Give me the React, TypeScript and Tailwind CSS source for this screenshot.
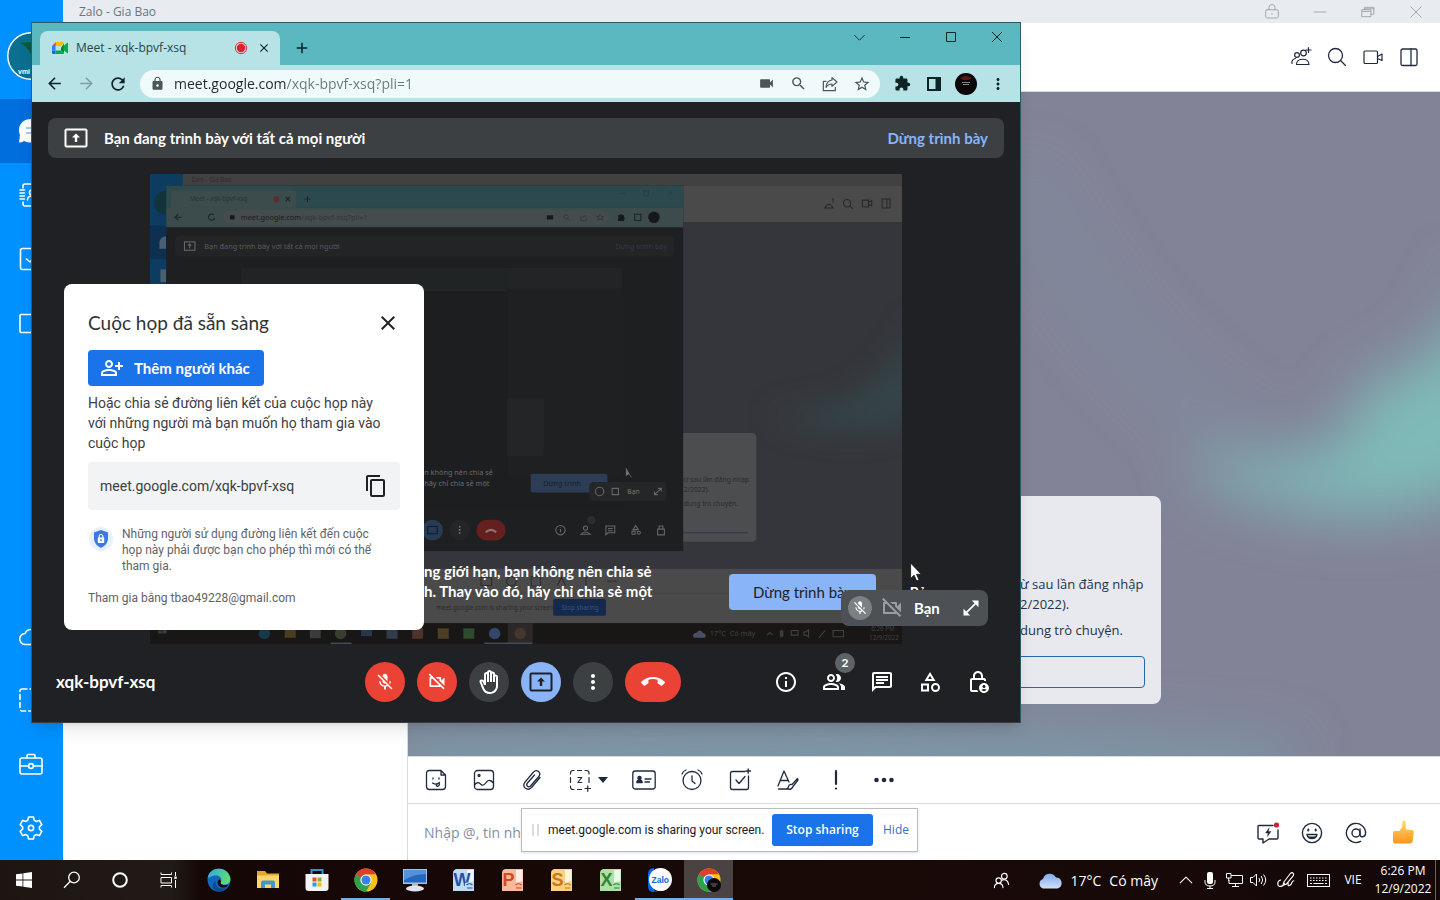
import React from "react";
import {
  MdArrowBack,
  MdArrowForward,
  MdCallEnd,
  MdClose,
  MdExtension,
  MdInfoOutline,
  MdLock,
  MdMicOff,
  MdMoreVert,
  MdOpenInFull,
  MdOutlineBackHand,
  MdOutlineCategory,
  MdOutlineChat,
  MdOutlineContentCopy,
  MdOutlineLockPerson,
  MdOutlinePeopleAlt,
  MdOutlinePersonAddAlt,
  MdOutlineVideocamOff,
  MdRefresh,
  MdAdd,
  MdSearch,
  MdStarBorder,
  MdVideocam,
} from "react-icons/md";

type IconProps = { size?: number; children: React.ReactNode; className?: string; stroke?: number };

function Line({ size = 24, children, className = "", stroke = 1.4 }: IconProps) {
  return (
    <svg
      width={size}
      height={size}
      viewBox="0 0 24 24"
      fill="none"
      stroke="currentColor"
      strokeWidth={stroke}
      strokeLinecap="round"
      strokeLinejoin="round"
      className={`block shrink-0 ${className}`}
      aria-hidden="true"
    >
      {children}
    </svg>
  );
}

function IconButton({
  label,
  className = "",
  children,
}: {
  label: string;
  className?: string;
  children: React.ReactNode;
}) {
  return (
    <button type="button" aria-label={label} className={`flex shrink-0 items-center justify-center ${className}`}>
      {children}
    </button>
  );
}

/* ---------- Zalo ---------- */

function ZaloSidebar() {
  const item = "h-16 w-full pr-px text-white";
  return (
    <nav className="flex w-[63px] shrink-0 flex-col bg-[#0091ff]">
      <div className="flex h-[99px] shrink-0 items-center justify-center pt-3 pr-px">
        <svg width="48" height="48" viewBox="0 0 48 48" aria-hidden="true">
          <circle cx="24" cy="24" r="23.2" fill="#0b6f8f" stroke="#fff" strokeWidth="1.4" />
          <path d="M13 11L24 10V22Q20 14 13 11Z" fill="#0a5a3c" />
          <text x="11" y="42" fontSize="7" fontWeight="700" fill="#fff" fontFamily="Liberation Sans, sans-serif">
            vmi
          </text>
        </svg>
      </div>
      <IconButton label="Tin nhắn" className={`${item} bg-[#006edc]`}>
        <svg width="26" height="26" viewBox="0 0 26 26" aria-hidden="true">
          <path d="M13 1C6 1 1 5.500 1 12q0 3 1 5l-1 7.500q3 0 5-1.500 3 1.500 7 1.500c7 0 12-5 12-12S20 1 13 1Z" fill="#fff" />
          <path d="M8 10h10M8 15h8" stroke="#4b9be8" strokeWidth="1.200" />
        </svg>
      </IconButton>
      <IconButton label="Danh bạ" className={item}>
        <Line stroke={1.6}>
          <path d="M4 5V3q0-2 2-2h14q2 0 2 2v18q0 2-2 2H6q-2 0-2-2v-2" />
          <path d="M1 7h4.500M1 10h4.500M1 13h4.500M1 16h4.500" />
          <circle cx="13" cy="9.500" r="2.500" />
          <path d="M8.500 17q0-4 4.500-4t4.500 4" />
        </Line>
      </IconButton>
      <IconButton label="Việc cần làm" className={item}>
        <Line stroke={1.6}>
          <rect x="1.500" y="1.500" width="21" height="21" rx="2" />
          <path d="M7.500 12l3.500 3 6-7" />
        </Line>
      </IconButton>
      <IconButton label="Thư mục" className={item}>
        <Line stroke={1.6}>
          <rect x="1" y="3.500" width="22" height="18" rx="1" />
        </Line>
      </IconButton>
      <div className="flex-1" />
      <IconButton label="Cloud" className={item}>
        <Line stroke={1.6}>
          <path d="M6.500 20.500h11a5.500 5.500 0 0 0 .5-11A6.500 6.500 0 0 0 6 9.500a5.500 5.500 0 0 0 .5 11Z" />
        </Line>
      </IconButton>
      <IconButton label="Chụp màn hình" className={item}>
        <Line stroke={1.6}>
          <rect x="1" y="1" width="22" height="22" rx="2" strokeDasharray="5 3" />
        </Line>
      </IconButton>
      <IconButton label="Công cụ" className={item}>
        <Line stroke={1.6}>
          <rect x="1" y="6" width="22" height="16" rx="2" />
          <path d="M8 5.500V3.700Q8 2.500 9.200 2.500h5.600Q16 2.500 16 3.700v1.800M1 14h8.500M14.500 14H23" />
          <circle cx="12" cy="14" r="2.400" />
        </Line>
      </IconButton>
      <IconButton label="Cài đặt" className={item}>
        <Line stroke={1.6}>
          <path d="M9.600 1h4.800l.8 3.300 2 1.100 3.200-1 2.400 4.200-2.400 2.200v2.400l2.400 2.200-2.400 4.200-3.200-1-2 1.100-.8 3.300H9.600l-.8-3.300-2-1.100-3.200 1-2.400-4.200 2.400-2.200v-2.400L1.200 8.600l2.400-4.200 3.200 1 2-1.100Z" />
          <circle cx="12" cy="12" r="2.600" />
        </Line>
      </IconButton>
    </nav>
  );
}

function ChatWallpaper() {
  return (
    <svg
      className="absolute inset-0 h-full w-full"
      viewBox="0 0 1032 664"
      preserveAspectRatio="none"
      aria-hidden="true"
    >
      <defs>
        <filter id="soft" x="-30%" y="-60%" width="160%" height="220%">
          <feGaussianBlur stdDeviation="28" />
        </filter>
      </defs>
      <rect width="1032" height="664" fill="#828397" />
      <g filter="url(#soft)">
        <path d="M610 80Q720 300 880 375Q1000 390 1080 180" fill="none" stroke="#7c94a2" strokeWidth="46" opacity=".4" />
        <path d="M790 360Q940 410 1080 190V390Q960 460 790 385Z" fill="#7fb6b8" />
        <path d="M950 300Q1020 270 1090 220V390Q1000 410 930 400Z" fill="#7fbab8" />
        <path d="M-20 640Q400 610 880 655V700H-20Z" fill="#7b99a8" />
      </g>
    </svg>
  );
}

function ZaloChat() {
  const tool = "w-12 h-full text-[#1f2b3d]";
  return (
    <section className="flex min-w-0 flex-1 flex-col border-l border-[#d6dbe1] bg-white">
      <header className="flex h-[69px] shrink-0 items-center justify-end gap-3 border-b border-[#d6dbe1] px-[19px] text-[#1f2b3d]">
        <IconButton label="Thêm thành viên">
          <Line stroke={1.2}>
            <circle cx="8" cy="10" r="2.400" />
            <circle cx="14.500" cy="8" r="2.800" />
            <path d="M7.500 19.500c0-7 12.500-7 12.500 0ZM3 18.500c-.6-2.500 1-4.500 3.500-5M19.500 2.500v5M17 5h5" />
          </Line>
        </IconButton>
        <IconButton label="Tìm kiếm">
          <Line stroke={1.3}>
            <circle cx="10.500" cy="10.500" r="7" />
            <path d="M16 16l4.500 4.500" />
          </Line>
        </IconButton>
        <IconButton label="Cuộc gọi video">
          <Line stroke={1.2}>
            <rect x="3" y="6" width="13.500" height="12.500" rx="1" />
            <path d="M16.500 11.500L21 9v6.500l-4.500-2" />
          </Line>
        </IconButton>
        <IconButton label="Thông tin hội thoại">
          <Line stroke={1.3}>
            <rect x="4" y="4" width="16" height="16.500" rx="1.500" />
            <path d="M14 4v16.500" />
          </Line>
        </IconButton>
      </header>

      <div className="relative flex flex-1 flex-col items-center justify-end pb-[52px]">
        <ChatWallpaper />
        <div className="relative flex w-[474px] flex-col rounded-lg bg-[#e7e9ee] px-4 pt-[78px] pb-4 text-[13px] text-[#24324a]">
          <div className="pl-[317px] leading-5">
            <p className="text-nowrap">
              ừ sau lần đăng nhập
              <br />
              2/2022).
            </p>
            <p className="mt-[6px] text-nowrap">dung trò chuyện.</p>
          </div>
          <button type="button" aria-label="Đồng bộ" className="mt-4 h-8 rounded border border-[#2566b0]" />
        </div>
      </div>

      <div className="flex h-[48px] shrink-0 items-center border-y border-[#d6dbe1] pl-1">
        <IconButton label="Sticker" className={tool}>
          <Line stroke={1.3}>
            <path d="M17 2.500H5.500q-3 0-3 3v13q0 3 3 3h13q3 0 3-3V7ZM17 2.500V7h4.500" />
            <path d="M9 10v1M15 10v1M8.500 15q4 2.500 7-.5M12.500 16v2q2.500 1 3-2" />
          </Line>
        </IconButton>
        <IconButton label="Hình ảnh" className={tool}>
          <Line stroke={1.3}>
            <rect x="2.500" y="2.500" width="19" height="19" rx="3" />
            <circle cx="7" cy="7.500" r="1" />
            <path d="M2.500 17q3-4 6-1t6-2q3-3.500 7 1" />
          </Line>
        </IconButton>
        <IconButton label="Đính kèm" className={tool}>
          <Line stroke={1.3}>
            <path d="M20 9.500l-8.500 10q-3 3-6 .8t-.7-6L13.500 4q2.500-2.500 5-.5t.3 5L10.500 18q-1.500 1.500-3 .3t-.3-3L14.500 7" />
          </Line>
        </IconButton>
        <button
          type="button"
          aria-label="Chụp màn hình"
          className="flex h-full w-[64px] shrink-0 items-center gap-[6px] pl-3 text-[#1f2b3d]"
        >
          <Line stroke={1.2}>
            <path d="M2.500 6V5q0-2.500 2.500-2.500h1M9.500 2.500h4M17 2.500h1.500q2.500 0 2.500 2.500v1M21 9.500v5M2.500 9.500v5M2.500 18v1q0 2.500 2.500 2.500h1M9.500 21.500h4M17 20.500h5.500M19.750 17.800v5.500" />
            <path d="M9.800 9.500h4l-4 5h4" />
          </Line>
          <svg width="10" height="6" viewBox="0 0 10 6" aria-hidden="true">
            <path d="M0 0h10L5 6Z" fill="currentColor" />
          </svg>
        </button>
        <IconButton label="Danh thiếp" className={tool}>
          <Line stroke={1.3}>
            <rect x=".8" y="3" width="22.400" height="18" rx="2.500" />
            <circle cx="7.500" cy="10" r="1.600" fill="currentColor" />
            <path d="M4.800 14.500q0-2.300 2.700-2.300t2.700 2.300ZM13 11h6M13 14h4.500" fill="currentColor" />
          </Line>
        </IconButton>
        <IconButton label="Nhắc hẹn" className={tool}>
          <Line stroke={1.3}>
            <circle cx="12" cy="12.500" r="9" />
            <path d="M12 8v5l3 2.500M2 6Q3 3 6 2M22 6q-1-3-4-4" />
          </Line>
        </IconButton>
        <IconButton label="Giao việc" className={tool}>
          <Line stroke={1.3}>
            <path d="M17 3.500H4.500q-2 0-2 2v14q0 2 2 2h14q2 0 2-2V8M8 12l3 3.500 6-7M18 3h4.500M20.200.8v4.500" />
          </Line>
        </IconButton>
        <IconButton label="Định dạng" className={tool}>
          <Line stroke={1.3}>
            <path d="M2 18L8 3l5 11M4.500 12.500h7M2.500 21h10M21.500 10.500l-5.500 6q-3-.5-3.500 2t-2 2.500q5 1.500 6.500-2.500l5-6.500Z" />
          </Line>
        </IconButton>
        <IconButton label="Quan trọng" className={tool}>
          <Line stroke={2.2}>
            <path d="M12 3v13M12 20.500v.1" />
          </Line>
        </IconButton>
        <IconButton label="Thêm" className={tool}>
          <svg width="24" height="24" viewBox="0 0 24 24" fill="currentColor" aria-hidden="true">
            <circle cx="4.500" cy="12" r="2.300" />
            <circle cx="12" cy="12" r="2.300" />
            <circle cx="19.500" cy="12" r="2.300" />
          </svg>
        </IconButton>
      </div>

      <div className="flex h-14 shrink-0 items-center gap-5 pr-6 pl-4 text-[#1f2b3d]">
        <input
          type="text"
          aria-label="Tin nhắn"
          placeholder="Nhập @, tin nh"
          className="min-w-0 flex-1 text-[14px] outline-none placeholder:text-[#7f8fa4]"
        />
        <IconButton label="Tin nhắn nhanh">
          <Line stroke={1.4}>
            <path d="M17 5.500H3q-1 0-1 1V18q0 1 1 1h4v4l6-4h8q1 0 1-1v-8" />
            <path d="M13 8l-3.500 5H12l-.5 3.500 3.500-5h-2.500Z" fill="currentColor" strokeWidth=".4" />
            <circle cx="20.500" cy="5" r="2.600" fill="#c9212f" stroke="none" />
          </Line>
        </IconButton>
        <IconButton label="Biểu cảm">
          <Line stroke={1.4}>
            <circle cx="12" cy="13" r="9.600" />
            <path d="M8.300 9.500v1M15.700 9.500v1" strokeWidth="2" />
            <path d="M7 14.500h10q-1 4-5 4t-5-4Z" />
            <path d="M8.500 16.500h7q-1 2-3.500 2t-3.500-2Z" fill="currentColor" stroke="none" />
          </Line>
        </IconButton>
        <IconButton label="Nhắc tên">
          <Line stroke={1.4}>
            <circle cx="12" cy="13" r="4" />
            <path d="M16 9v5.500c0 3.500 5.600 3 5.600-1.500a9.600 9.600 0 1 0-5 8.400" />
          </Line>
        </IconButton>
        <IconButton label="Thích" className="ml-[2px]">
          <svg width="26" height="26" viewBox="0 0 26 26" aria-hidden="true">
            <defs>
              <linearGradient id="thumb" x1="0" y1="0" x2="0" y2="1">
                <stop offset="0" stopColor="#fddc6a" />
                <stop offset="1" stopColor="#f7961e" />
              </linearGradient>
            </defs>
            <path
              d="M3 14q0-2 2-2h4.500l2.700-4 .3-6q2-1.300 3 .5l.5 8 6 .5q2 0 1.800 2l-1 8.500q-.3 3-3.300 3H5q-2 0-2-2Z"
              fill="url(#thumb)"
            />
            <path d="M17 14.500h6M16.500 18h6.300M16.500 21h5" stroke="#f5a433" strokeWidth=".7" />
          </svg>
        </IconButton>
      </div>
    </section>
  );
}

function ZaloWindow() {
  return (
    <div className="flex h-full">
      <ZaloSidebar />
      <div className="flex min-w-0 flex-1 flex-col">
        <div className="flex h-[23px] shrink-0 items-center justify-between bg-[#e8ebef] pr-3 pl-4 text-[12px] text-[#6d747e]">
          <span>Zalo - Gia Bao</span>
          <div className="flex items-center gap-6 text-[#a3a8ae]">
            <IconButton label="Khóa" className="w-6">
              <Line size={18} stroke={1.3}>
                <rect x="3.500" y="9" width="17" height="11" rx="2" />
                <path d="M8 9V6q0-4 4-4t4 4v3M12 14v1" />
              </Line>
            </IconButton>
            <IconButton label="Thu nhỏ" className="w-6">
              <Line size={14} stroke={2}>
                <path d="M2 12h20" />
              </Line>
            </IconButton>
            <IconButton label="Khôi phục" className="w-6">
              <Line size={14} stroke={1.7}>
                <path d="M2 8h15v12H2ZM2 11h15M6 8V4h16v12h-5M6 6.500h16" />
              </Line>
            </IconButton>
            <IconButton label="Đóng" className="w-6">
              <Line size={14} stroke={1.7}>
                <path d="M3 3l18 18M21 3L3 21" />
              </Line>
            </IconButton>
          </div>
        </div>
        <div className="flex min-h-0 flex-1">
          <aside className="w-[344px] shrink-0 bg-white" />
          <ZaloChat />
        </div>
      </div>
    </div>
  );
}

/* ---------- Chrome window with Google Meet ---------- */

function MeetLogo() {
  return (
    <svg width="16" height="14" viewBox="1 0 16 14" aria-hidden="true">
      <path d="M5 1v4H1Z" fill="#ea4335" />
      <path d="M1 5h3.500v4.500H1Z" fill="#2684fc" />
      <path d="M1 9.500h3.500V13H2.500Q1 13 1 11.500Z" fill="#1967d2" />
      <path d="M4.500 9.500H10L13 12q0 1-1 1H4.500Z" fill="#00ac47" />
      <path d="M5 1h6.500Q13 1 13 2.500L10 5H4.500Z" fill="#ffba00" />
      <path d="M10 7l3-4.500V12L10 9.500Z" fill="#00832d" />
      <path d="M12.500 5L16 2q1-.5 1 .5v9q0 1-1 .5l-3.500-3Z" fill="#00ac47" />
    </svg>
  );
}

function ChromeFrame() {
  return (
    <div className="shrink-0 bg-[#5bb8c1] text-[#0e2326]">
      <div className="flex h-[42px] items-end pl-2">
        <div className="flex h-[34px] w-[240px] items-center rounded-t-lg bg-[#b7e2e6] pr-2 pl-3">
          <MeetLogo />
          <span className="flex-1 pl-2 text-[12px] text-[#24474b]">Meet - xqk-bpvf-xsq</span>
          <svg width="14" height="14" viewBox="0 0 14 14" aria-hidden="true">
            <circle cx="7" cy="7" r="5.700" fill="none" stroke="#e2343f" />
            <circle cx="7" cy="7" r="4.200" fill="#e2202c" />
          </svg>
          <IconButton label="Đóng thẻ" className="ml-2 size-4">
            <MdClose size={14} />
          </IconButton>
        </div>
        <IconButton label="Thẻ mới" className="mx-3 h-[34px] w-5">
          <MdAdd size={18} />
        </IconButton>
        <div className="ml-auto flex self-start pt-[2px]">
          <IconButton label="Tìm kiếm thẻ" className="h-6 w-[46px]">
            <Line size={13} stroke={1.6}>
              <path d="M3 8l9 9 9-9" />
            </Line>
          </IconButton>
          <IconButton label="Thu nhỏ" className="h-6 w-[46px]">
            <svg width="10" height="10" viewBox="0 0 10 10" stroke="currentColor" aria-hidden="true">
              <path d="M0 5.500h10" />
            </svg>
          </IconButton>
          <IconButton label="Phóng to" className="h-6 w-[46px]">
            <svg width="10" height="10" viewBox="0 0 10 10" fill="none" stroke="currentColor" aria-hidden="true">
              <path d="M.5.500h9v9h-9Z" />
            </svg>
          </IconButton>
          <IconButton label="Đóng" className="h-6 w-[46px]">
            <svg width="10" height="10" viewBox="0 0 10 10" stroke="currentColor" aria-hidden="true">
              <path d="M0 0l10 10M10 0L0 10" />
            </svg>
          </IconButton>
        </div>
      </div>

      <div className="flex h-[37px] items-center bg-[#b7e2e6] px-[6px]">
        <IconButton label="Quay lại" className="size-8">
          <MdArrowBack size={19} />
        </IconButton>
        <IconButton label="Tiến" className="size-8 text-[#7fa0a4]">
          <MdArrowForward size={19} />
        </IconButton>
        <IconButton label="Tải lại" className="size-8">
          <MdRefresh size={20} />
        </IconButton>
        <div className="ml-[6px] flex h-7 flex-1 items-center rounded-full bg-[#f0fafb] pr-[2px] pl-[10px] text-[#4c5557]">
          <MdLock size={15} />
          <input
            type="text"
            aria-label="Địa chỉ"
            defaultValue="meet.google.com/xqk-bpvf-xsq?pli=1"
            className="ml-[9px] min-w-0 flex-1 bg-[linear-gradient(90deg,#20282a_112px,#66777a_112px)] bg-clip-text text-[14px] text-transparent outline-none"
          />
          <IconButton label="Máy ảnh" className="size-8">
            <MdVideocam size={17} />
          </IconButton>
          <IconButton label="Thu phóng" className="size-8">
            <MdSearch size={17} />
          </IconButton>
          <IconButton label="Chia sẻ" className="size-8">
            <Line size={16} stroke={1.8}>
              <path d="M6 8H2v14h18v-5M15 2.500l7.500 6.500-7.500 6.500V12Q9 12 6 17q1-10 9-11Z" />
            </Line>
          </IconButton>
          <IconButton label="Đánh dấu" className="size-8">
            <MdStarBorder size={18} />
          </IconButton>
        </div>
        <IconButton label="Tiện ích" className="ml-[6px] size-8">
          <MdExtension size={17} />
        </IconButton>
        <IconButton label="Bảng điều khiển bên" className="size-8">
          <svg width="14" height="14" viewBox="0 0 14 14" aria-hidden="true">
            <path d="M0 0h14v14H0ZM2 2v10h6.500V2Z" fill="currentColor" fillRule="evenodd" />
          </svg>
        </IconButton>
        <IconButton label="Hồ sơ" className="size-8">
          <svg width="22" height="22" viewBox="0 0 22 22" aria-hidden="true">
            <circle cx="11" cy="11" r="11" fill="#0a0709" />
            <path d="M5 5q6-4 12 0l-4 2H8Z" fill="#5d1519" />
            <path d="M7 9.500h8M8 11.500h6" stroke="#8f8288" />
          </svg>
        </IconButton>
        <IconButton label="Trình đơn" className="size-8">
          <MdMoreVert size={18} />
        </IconButton>
      </div>
    </div>
  );
}

function PresentBox({ size = 24 }: { size?: number }) {
  return (
    <svg width={size} height={size} viewBox="0 0 24 24" fill="none" aria-hidden="true">
      <rect x="1.500" y="3.500" width="21" height="17" rx="1" stroke="currentColor" strokeWidth="2" />
      <path d="M12 7.500l4 4h-2.800v4.500h-2.400v-4.500H8Z" fill="currentColor" />
    </svg>
  );
}

/* The presenter's own screen, shown dimmed inside the call. */
function SharedScreen() {
  const sans = "Noto Sans, sans-serif";
  return (
    <svg className="block w-full" viewBox="0 0 1440 900" aria-hidden="true">
      <defs>
        <filter id="glow" x="-50%" y="-50%" width="200%" height="200%">
          <feGaussianBlur stdDeviation="30" />
        </filter>
        <clipPath id="chat-area">
          <rect x="408" y="92" width="1032" height="664" />
        </clipPath>
      </defs>
      <rect width="1440" height="900" fill="#4a4a4b" />
      <rect width="63" height="860" fill="#0e3c60" />
      <rect y="99" width="63" height="64" fill="#0d3050" />
      <circle cx="31" cy="55" r="23" fill="#12333c" />
      <path d="M31 119q-13 1-13 14v10h13ZM20 183h11v24H20ZM20 249h11v20H20Z" fill="#4a6070" />
      <rect x="63" width="1377" height="23" fill="#414142" />
      <text x="79" y="16" fontSize="12" fill="#2c2c2d" fontFamily={sans}>Zalo - Gia Bao</text>
      <rect x="408" y="92" width="1032" height="664" fill="#35363c" />
      <g clipPath="url(#chat-area)">
        <path d="M1200 450Q1380 480 1480 260V460Q1380 520 1200 470Z" fill="#35504f" filter="url(#glow)" opacity=".6" />
      </g>
      <g fill="none" stroke="#26282b" strokeWidth="2">
        <circle cx="1335" cy="56" r="7" />
        <path d="M1340 61l6 6M1364 50h12v13h-12ZM1376 54l6-3v10l-6-3M1402 48h15v17h-15ZM1411 48v17M1292 65q8-14 16 0ZM1308 46v8" />
      </g>
      <rect x="1000" y="496" width="161" height="208" rx="8" fill="#4c4d4e" />
      <g fontFamily={sans} fontSize="13" fill="#2a2b2e">
        <text x="1022" y="590">ừ sau lần đăng nhập</text>
        <text x="1022" y="609">2/2022).</text>
        <text x="1022" y="636">dung trò chuyện.</text>
      </g>
      <path d="M1000 687h145" stroke="#27384d" strokeWidth="2" />

      <rect x="31" y="22" width="990" height="700" fill="#1e1f21" />
      <rect x="31" y="22" width="990" height="43" fill="#2c4a4d" />
      <path d="M40 39q0-8 8-8h224q8 0 8 8v26H40Z" fill="#3c4b4c" />
      <rect x="31" y="65" width="990" height="37" fill="#3c4b4c" />
      <rect x="140" y="69" width="740" height="28" rx="14" fill="#454c4d" />
      <g fontFamily={sans} fill="#191b1d">
        <text x="76" y="52" fontSize="12" fill="#293435">Meet - xqk-bpvf-xsq</text>
        <text x="174" y="88" fontSize="14">meet.google.com</text>
        <text x="290" y="88" fontSize="14" fill="#30383a">/xqk-bpvf-xsq?pli=1</text>
      </g>
      <circle cx="242" cy="48" r="6" fill="#5d2b30" />
      <g fill="none" stroke="#1c2224" strokeWidth="2">
        <path d="M296 48h11M301.500 42v12M260 44l8 8M268 44l-8 8M48 83h13M54 77l-6 6 6 6M122 78a6 6 0 1 0 2 6" />
        <path d="M928 77h12v12h-12Z" />
      </g>
      <path d="M900 37h10M946 32h9v10h-9ZM992 32l9 9M1001 32l-9 9" fill="none" stroke="#233a3d" strokeWidth="1.500" />
      <g fill="none" stroke="#2c3638" strokeWidth="1.500">
        <circle cx="797" cy="82" r="4" />
        <path d="M800 85l4 4M825 80v9h11v-4M828 85q1-6 8-5M862 77l2 4h5l-4 3 2 5-5-3-5 3 2-5-4-3h5Z" />
      </g>
      <g fill="#16191b">
        <circle cx="965" cy="83" r="11" />
        <path d="M896 79h4q2-5 4 0h4v4q3 1 0 3v4h-12v-4q3-2 0-4Z" />
        <rect x="153" y="79" width="9" height="8" />
        <rect x="760" y="79" width="12" height="8" />
      </g>
      <rect x="48" y="118" width="956" height="40" rx="8" fill="#232426" />
      <rect x="66" y="130" width="20" height="16" fill="none" stroke="#67686a" strokeWidth="2" />
      <path d="M76 134v8M73 137l3-3 3 3" fill="none" stroke="#67686a" strokeWidth="2" />
      <text x="104" y="143" fontSize="14" fill="#5b5c5e" fontFamily={sans}>Bạn đang trình bày với tất cả mọi người</text>
      <text x="891" y="143" fontSize="14" fill="#323a48" fontFamily={sans}>Dừng trình bày</text>
      <g>
        <rect x="174" y="180" width="730" height="460" fill="#1d1e20" />
        <path d="M174 180h510v45H174Z" fill="#202425" />
        <rect x="684" y="180" width="220" height="40" fill="#232426" />
        <rect x="684" y="220" width="220" height="360" fill="#1f2022" />
        <rect x="684" y="430" width="70" height="110" rx="4" fill="#242527" />
      </g>
      <g fontFamily={sans} fontSize="14" fill="#6a6b6d">
        <text x="525" y="576">n không nên chia sẻ</text>
        <text x="525" y="597">hãy chỉ chia sẻ một</text>
      </g>
      <rect x="729" y="574" width="147" height="36" rx="4" fill="#2d3d56" />
      <text x="753" y="597" fontSize="14" fill="#18202d" fontFamily={sans}>Dừng trình</text>
      <rect x="841" y="590" width="148" height="36" rx="8" fill="#252628" />
      <g fill="none" stroke="#66686a" strokeWidth="2">
        <circle cx="861" cy="608" r="8" />
        <path d="M885 602h12v12h-12ZM966 614l13-12M973 602h6v6M966 608v6h6" />
        <circle cx="786" cy="682" r="9" />
        <path d="M786 680v6M786 677v1" />
        <circle cx="834" cy="678" r="4" />
        <path d="M825 690q9-9 18 0ZM873 674h17v13h-13l-4 4ZM877 679h9M877 683h9M930 673l5 8h-10ZM923 684h6v6h-6ZM972 680h13v11h-13ZM975 680v-6h7v6" />
        <circle cx="936" cy="687" r="3" />
      </g>
      <text x="914" y="613" fontSize="13" fill="#77797b" fontFamily={sans}>Bạn</text>
      <circle cx="845" cy="663" r="8" fill="#2c2d30" />
      <path d="M912 563v15l5-4 5 7" fill="#77797b" stroke="#77797b" />
      <circle cx="541" cy="682" r="20" fill="#263b56" />
      <rect x="532" y="675" width="18" height="14" fill="none" stroke="#131a24" strokeWidth="2" />
      <circle cx="593" cy="682" r="20" fill="#242528" />
      <path d="M593 674v16" stroke="#77797b" strokeWidth="3" strokeDasharray="3 3" />
      <rect x="625" y="662" width="56" height="40" rx="20" fill="#63201f" />
      <path d="M643 686q10-9 20 0" fill="none" stroke="#8c7776" strokeWidth="4" />

      <g fill="none" stroke="#2b2c2e" strokeWidth="2">
        <path d="M634 772h20v16h-20ZM730 771h18v18h-18ZM780 788l8-16 8 16M835 771v16M875 780h18" />
        <circle cx="692" cy="780" r="9" />
      </g>
      <path d="M408 803h1032" stroke="#3d3e3f" />
      <text x="548" y="834" fontSize="12" fill="#2a2b2c" fontFamily={sans}>meet.google.com is sharing your screen.</text>
      <rect x="772" y="814" width="101" height="32" rx="3" fill="#15294d" />
      <text x="788" y="834" fontSize="12" fill="#38557f" fontFamily={sans}>Stop sharing</text>
      <rect y="860" width="1440" height="40" fill="#191616" />
      <g fill="#3b3a3c">
        <path d="M16 874h7v6h-7ZM24 873h8v7h-8Z" />
        <circle cx="219" cy="880" r="11" fill="#173a4a" />
        <rect x="258" y="871" width="21" height="17" fill="#4a3d22" />
        <rect x="306" y="871" width="21" height="18" />
        <circle cx="365" cy="880" r="11" fill="#393f30" />
        <rect x="404" y="871" width="21" height="14" fill="#26364c" />
        <rect x="453" y="870" width="21" height="20" fill="#303c4c" />
        <rect x="502" y="870" width="21" height="20" fill="#4c332b" />
        <rect x="551" y="870" width="21" height="20" fill="#4e3e25" />
        <rect x="600" y="870" width="21" height="20" fill="#2e4a2f" />
        <circle cx="660" cy="880" r="11" fill="#35456b" />
        <rect x="685" y="860" width="48" height="40" fill="#2c2828" />
        <circle cx="709" cy="880" r="11" fill="#46372e" />
        <path d="M346 897h40v3h-40ZM640 897h92v3h-92Z" fill="#3d4c5c" />
        <path d="M1041 888q-4-8 6-10 6-8 12 1 8 2 4 9Z" fill="#474f60" />
        <rect x="1206" y="873" width="7" height="14" rx="3" />
      </g>
      <g fontFamily={sans} fill="#434243" fontSize="14">
        <text x="1072" y="885">17°C</text>
        <text x="1110" y="885">Có mây</text>
        <text x="1381" y="876" fontSize="12">6:26 PM</text>
        <text x="1377" y="893" fontSize="12">12/9/2022</text>
      </g>
      <path
        d="M1182 883l5-5 5 5M1228 874h13v9h-13ZM1281 888l12-14M1308 874h20v12h-20ZM1252 877h4l5-4v14l-5-4h-4Z"
        fill="none"
        stroke="#434243"
        strokeWidth="2"
      />
    </svg>
  );
}

function ReadyDialog() {
  return (
    <section
      aria-labelledby="ready-title"
      className="absolute top-[182px] left-8 w-[360px] rounded-lg bg-white px-6 pt-5 pb-6 font-['Roboto',sans-serif] text-[#3c4043]"
    >
      <header className="flex h-[38px] items-center justify-between">
        <h2 id="ready-title" className="font-['Lato','Inter',sans-serif] text-[19px] text-[#303336]">
          Cuộc họp đã sẵn sàng
        </h2>
        <IconButton label="Đóng" className="size-6 text-[#202124]">
          <MdClose size={24} />
        </IconButton>
      </header>
      <button
        type="button"
        className="mt-2 flex h-9 w-[176px] items-center gap-[10px] rounded bg-[#1a73e8] pl-3 font-['Lato','Inter',sans-serif] text-[15px] font-bold text-white"
      >
        <MdOutlinePersonAddAlt size={24} />
        Thêm người khác
      </button>
      <p className="mt-[7px] text-[14px] leading-5 text-nowrap">
        Hoặc chia sẻ đường liên kết của cuộc họp này
        <br />
        với những người mà bạn muốn họ tham gia vào
        <br />
        cuộc họp
      </p>
      <div className="mt-[9px] flex h-12 items-center justify-between rounded bg-[#f1f3f4] px-3 text-[14px]">
        <span>meet.google.com/xqk-bpvf-xsq</span>
        <IconButton label="Sao chép" className="size-6 text-[#202124]">
          <MdOutlineContentCopy size={24} />
        </IconButton>
      </div>
      <div className="mt-4 flex text-[12px] leading-4 text-nowrap text-[#5f6368]">
        <svg className="mr-2 shrink-0" width="26" height="26" viewBox="0 0 26 26" aria-hidden="true">
          <circle cx="13" cy="13" r="12" fill="#e8f0fe" />
          <path d="M13 4l7 2.600v5.900q0 6-7 9.500-7-3.500-7-9.500V6.600Z" fill="#3b78e7" />
          <rect x="9.800" y="11.500" width="6.400" height="5.500" rx=".8" fill="#fff" />
          <path d="M11.200 12v-1.800q0-1.700 1.800-1.700t1.800 1.700V12" fill="none" stroke="#fff" strokeWidth="1.200" />
          <circle cx="13" cy="14.200" r=".9" fill="#3b78e7" />
        </svg>
        <p>
          Những người sử dụng đường liên kết đến cuộc
          <br />
          họp này phải được bạn cho phép thì mới có thể
          <br />
          tham gia.
        </p>
      </div>
      <p className="mt-4 text-[12px] leading-4 text-[#5f6368]">Tham gia bằng tbao49228@gmail.com</p>
    </section>
  );
}

function CallBar() {
  const round = "size-10 rounded-full";
  return (
    <div className="grid h-[78px] shrink-0 grid-cols-[309px_auto_1fr] items-center pr-[18px] pb-[2px] pl-6 text-white">
      <span className="text-[17px] font-bold">xqk-bpvf-xsq</span>
      <div className="flex gap-3">
        <IconButton label="Bật micrô" className={`${round} bg-[#ea4335]`}>
          <MdMicOff size={20} />
        </IconButton>
        <IconButton label="Bật máy ảnh" className={`${round} bg-[#ea4335]`}>
          <MdOutlineVideocamOff size={20} />
        </IconButton>
        <IconButton label="Giơ tay" className={`${round} bg-[#3c4043]`}>
          <MdOutlineBackHand size={24} />
        </IconButton>
        <IconButton label="Trình bày" className={`${round} bg-[#8ab4f8] text-[#202124]`}>
          <PresentBox />
        </IconButton>
        <IconButton label="Tùy chọn khác" className={`${round} bg-[#3c4043]`}>
          <MdMoreVert size={24} />
        </IconButton>
        <IconButton label="Rời khỏi cuộc gọi" className="h-10 w-14 rounded-full bg-[#ea4335]">
          <MdCallEnd size={24} />
        </IconButton>
      </div>
      <div className="flex justify-end">
        <IconButton label="Chi tiết cuộc họp" className="h-12 w-12">
          <MdInfoOutline size={24} />
        </IconButton>
        <IconButton label="Hiển thị tất cả mọi người" className="relative h-12 w-12">
          <MdOutlinePeopleAlt size={24} />
          <span className="absolute -top-[5px] right-[3px] flex size-5 items-center justify-center rounded-full bg-[#5f6368] text-[12px] font-bold">
            2
          </span>
        </IconButton>
        <IconButton label="Trò chuyện" className="h-12 w-12">
          <MdOutlineChat size={24} />
        </IconButton>
        <IconButton label="Hoạt động" className="h-12 w-12">
          <MdOutlineCategory size={24} />
        </IconButton>
        <IconButton label="Chế độ kiểm soát của người tổ chức" className="h-12 w-12">
          <MdOutlineLockPerson size={24} />
        </IconButton>
      </div>
    </div>
  );
}

function MeetWindow() {
  return (
    <main className="absolute top-[22px] left-[31px] flex w-[990px] flex-col border border-[#2b5c62] border-b-[#3a3c40] bg-[#202124] shadow-lg">
      <ChromeFrame />
      <div className="relative flex flex-col font-['Lato','Inter',sans-serif]">
        <div className="mx-4 mt-4 flex h-10 items-center rounded-lg bg-[#3c4043] px-4 text-[15px] font-bold text-white">
          <PresentBox />
          <span className="flex-1 pl-4">Bạn đang trình bày với tất cả mọi người</span>
          <button type="button" className="text-[#8ab4f8]">
            Dừng trình bày
          </button>
        </div>
        <div className="relative mx-auto mt-4 w-[752px]">
          <SharedScreen />
          <div className="absolute right-[26px] bottom-[34px] flex w-[452px] items-end justify-between">
            <p className="pb-[9px] text-[15px] leading-5 font-bold text-nowrap text-white">
              ng giới hạn, bạn không nên chia sẻ
              <br />
              h. Thay vào đó, hãy chỉ chia sẻ một
            </p>
            <button type="button" className="h-9 w-[147px] rounded bg-[#8ab4f8] text-[15px] text-[#202124]">
              Dừng trình bày
            </button>
          </div>
        </div>
        <span className="absolute right-[94px] bottom-[120px] text-[14px] leading-5 font-bold text-white">Bả</span>
        <div className="absolute right-8 bottom-24 flex h-9 w-[147px] items-center rounded-lg bg-[#4d5054] px-[7px] text-[15px] font-bold text-white">
          <span className="flex size-6 items-center justify-center rounded-full bg-[#7d8083]">
            <MdMicOff size={16} />
          </span>
          <MdOutlineVideocamOff size={24} className="ml-2 text-[#9a9da1]" />
          <span className="flex-1 pl-[10px]">Bạn</span>
          <IconButton label="Mở rộng" className="size-5">
            <MdOpenInFull size={20} />
          </IconButton>
        </div>
        <CallBar />
        <ReadyDialog />
      </div>
    </main>
  );
}

function SharingBar() {
  return (
    <div className="absolute bottom-2 left-[521px] flex h-11 w-[397px] items-center border border-[#b9bcc0] bg-white pl-[10px] text-[12px] shadow">
      <span className="mr-[9px] flex h-3 w-[7px] justify-between border-x-2 border-[#dadce0]" />
      <span className="w-[224px] font-['Roboto',sans-serif] text-nowrap text-[#202124]">
        meet.google.com is sharing your screen.
      </span>
      <button type="button" className="h-8 w-[101px] rounded-[3px] bg-[#1a73e8] font-semibold text-white">
        Stop sharing
      </button>
      <button type="button" className="ml-[10px] text-[#3c6fc4]">
        Hide
      </button>
    </div>
  );
}

/* ---------- Taskbar ---------- */

function ChromeLogo({ badge = false }: { badge?: boolean }) {
  return (
    <svg width="24" height="24" viewBox="0 0 24 24" aria-hidden="true">
      <circle cx="12" cy="12" r="11.500" fill="#fbc116" />
      <path d="M12 12L2 6.300A11.500 11.500 0 0 0 12 23.500l5-8.500Z" fill="#2ba24c" />
      <path d="M2 6.300L7 15l5-3V6.300Z" fill="#2ba24c" />
      <path d="M2 6.300A11.500 11.500 0 0 1 22 6.300H12a5.700 5.700 0 0 0-5 3Z" fill="#e33b2e" />
      <circle cx="12" cy="12" r="5.600" fill="#fff" />
      <circle cx="12" cy="12" r="4.500" fill="#3b7fe8" />
      {badge && (
        <g>
          <circle cx="17" cy="17" r="7" fill="#0b090b" />
          <path d="M13.500 16h7M15 18h4" stroke="#85777c" strokeWidth=".9" />
        </g>
      )}
    </svg>
  );
}

function OfficeIcon({ letter, color, tint }: { letter: string; color: string; tint: string }) {
  return (
    <svg width="24" height="24" viewBox="0 0 24 24" aria-hidden="true">
      <path d="M4 1h18v22H1V5q0-3 3-4Z" fill={tint} />
      <path d="M15 2h6.500v20H15Z" fill="#fff" opacity=".75" />
      <text x="1.500" y="17.500" fontSize="18" fontWeight="700" fill={color} fontFamily="Liberation Sans, sans-serif">
        {letter}
      </text>
      <path d="M13 15l9-2v10h-9Z" fill={tint} />
      <path d="M14.500 17q3-2.500 6 0M15 20h5.500" stroke={color} strokeWidth="1.200" fill="none" />
    </svg>
  );
}

function Taskbar() {
  const sys = "h-10 w-12";
  const app = "relative h-10 w-[49px]";
  const tray = "h-10 w-6";
  return (
    <footer className="flex h-10 shrink-0 items-center bg-[linear-gradient(90deg,#1c1512,#211a16_12%,#150705_14%,#190a08_60%,#140808)] text-white">
      <IconButton label="Start" className={sys}>
        <svg width="16" height="16" viewBox="0 0 16 16" fill="#fff" aria-hidden="true">
          <path d="M0 2.300L6.500 1.400V7.600H0ZM7.300 1.300L16 0v7.600H7.300ZM0 8.400h6.500v6.200L0 13.700ZM7.300 8.400H16V16l-8.700-1.300Z" />
        </svg>
      </IconButton>
      <IconButton label="Search" className={sys}>
        <svg width="18" height="18" viewBox="0 0 18 18" fill="none" stroke="#fff" strokeWidth="1.300" aria-hidden="true">
          <circle cx="11" cy="6.500" r="5.300" />
          <path d="M7.300 10.300L1 16.800" />
        </svg>
      </IconButton>
      <IconButton label="Cortana" className={sys}>
        <svg width="18" height="18" viewBox="0 0 18 18" aria-hidden="true">
          <circle cx="9" cy="9" r="6.800" fill="none" stroke="#fff" strokeWidth="2" />
        </svg>
      </IconButton>
      <IconButton label="Task View" className={sys}>
        <svg width="17" height="16" viewBox="0 0 17 16" fill="none" stroke="#fff" aria-hidden="true">
          <path d="M1 .5v2h10.500v-2M1 5.500h10.500v5.500H1ZM1 15.500v-2h10.500v2M15.500 0v4M15.500 8v8" />
          <rect x="14.300" y="4.500" width="2.400" height="2.400" fill="#fff" stroke="none" />
        </svg>
      </IconButton>
      <div className="ml-[2px] flex">
        <IconButton label="Microsoft Edge" className={app}>
          <svg width="24" height="24" viewBox="0 0 24 24" aria-hidden="true">
            <defs>
              <linearGradient id="edge-top" x1="0" y1="0" x2="1" y2=".3">
                <stop offset="0" stopColor="#2ba8e8" />
                <stop offset="1" stopColor="#5fdc72" />
              </linearGradient>
            </defs>
            <circle cx="12" cy="12" r="11.500" fill="#1267bd" />
            <path d="M.8 10C2-1.500 20-3 23.300 10c.7 4-2.300 6.500-6 6.500-3.500 0-4.500-1.500-3.300-3 1.500-3-1.500-6-5-6S2 9.500.8 10Z" fill="url(#edge-top)" />
            <path d="M8.500 12.500c-1 6 5 10.500 12 6.500-3 4.500-8 5-11 4-4-1.500-5.500-7-1-10.500Z" fill="#0a4a94" />
            <path d="M14 13.500c-1.500 2.500 1 4.500 7 3.300l-.8 1.700c-5 2.500-9 0-9.700-3.500 0-1.500 1-3.500 2.500-3.500Z" fill="#170806" />
          </svg>
        </IconButton>
        <IconButton label="File Explorer" className={app}>
          <svg width="22" height="20" viewBox="0 0 22 20" aria-hidden="true">
            <path d="M0 1h8l2 2.500h12V18H0Z" fill="#e5a92c" />
            <path d="M0 5.500h22V18H0Z" fill="#fcd668" />
            <path d="M4 18v-5.500q0-2 2-2h10q2 0 2 2V18h-4v-3.500H8V18Z" fill="#4594d2" />
          </svg>
        </IconButton>
        <IconButton label="Microsoft Store" className={app}>
          <svg width="24" height="24" viewBox="0 0 24 24" aria-hidden="true">
            <path d="M6.500 6V2h11v4" fill="none" stroke="#2c97d3" strokeWidth="2" />
            <path d="M.5 6h23v14q0 3-3 3h-17q-3 0-3-3Z" fill="#f3f3f2" />
            <path d="M7.500 9.500h4v4h-4Z" fill="#e4502a" />
            <path d="M12.500 9.500h4v4h-4Z" fill="#7fb62a" />
            <path d="M7.500 14.500h4v4h-4Z" fill="#2ba0dc" />
            <path d="M12.500 14.500h4v4h-4Z" fill="#f7b61a" />
          </svg>
        </IconButton>
        <IconButton label="Google Chrome" className={`${app} border-b-2 border-[#76aee8] pt-[2px]`}>
          <ChromeLogo />
        </IconButton>
        <IconButton label="Remote Desktop" className={app}>
          <svg width="24" height="24" viewBox="0 0 24 24" aria-hidden="true">
            <path d="M0 1h24v15H0Z" fill="#9fc3ea" />
            <path d="M1 2h22v12.500H1Z" fill="#2569bd" />
            <path d="M1 2h22v4Q11 6 1 12Z" fill="#5592dc" />
            <path d="M9 16h6v3H9Z" fill="#aab4c2" />
            <ellipse cx="12" cy="20.500" rx="9" ry="3" fill="#dfe4ee" />
          </svg>
        </IconButton>
        <IconButton label="Word" className={app}>
          <OfficeIcon letter="W" color="#1d55a5" tint="#c3daf3" />
        </IconButton>
        <IconButton label="PowerPoint" className={app}>
          <OfficeIcon letter="P" color="#cf4a22" tint="#fbb99c" />
        </IconButton>
        <IconButton label="Outlook" className={app}>
          <OfficeIcon letter="S" color="#c9791a" tint="#fbd080" />
        </IconButton>
        <IconButton label="Excel" className={app}>
          <OfficeIcon letter="X" color="#2f8535" tint="#b2dfa6" />
        </IconButton>
        <IconButton label="Zalo" className={`${app} border-b-2 border-[#76aee8] pt-[2px]`}>
          <svg width="24" height="24" viewBox="0 0 24 24" aria-hidden="true">
            <path d="M0 6Q0 0 6 0v24Q0 24 0 18Z" fill="#0a68e4" />
            <circle cx="12.500" cy="11.500" r="11.500" fill="#fdfdff" />
            <path d="M1 16q2 7 10 7.500H4Q0 23 1 16Z" fill="#0a68e4" />
            <text x="3.500" y="15" fontSize="8.500" fontWeight="700" fill="#0a68e4" fontFamily="Liberation Sans, sans-serif">
              Zalo
            </text>
          </svg>
        </IconButton>
        <IconButton label="Google Chrome – Meet" className={`${app} border-b-2 border-[#76aee8] bg-[#4b4242] pt-[2px]`}>
          <ChromeLogo badge />
        </IconButton>
      </div>

      <div className="ml-auto flex items-center">
        <IconButton label="People" className="mr-6 h-10 w-6">
          <Line size={17} stroke={1.6}>
            <circle cx="16" cy="6" r="4" />
            <circle cx="8" cy="12" r="3.800" />
            <path d="M2 22q0-6 6-6t6 6M12.500 11.500q8-2.500 9.500 6" />
          </Line>
        </IconButton>
        <button type="button" className="flex h-10 items-center text-[14px]">
          <svg width="25" height="17" viewBox="0 0 25 17" aria-hidden="true">
            <defs>
              <linearGradient id="cloud" x1="0" y1="0" x2="0" y2="1">
                <stop offset="0" stopColor="#7ea9ee" />
                <stop offset="1" stopColor="#d3e0f8" />
              </linearGradient>
            </defs>
            <path d="M5 16.500a5 5 0 0 1 0-9.500 7 7 0 0 1 13-1.500 5.600 5.600 0 0 1 1.500 11Z" fill="url(#cloud)" />
          </svg>
          <span className="ml-2">17°C</span>
          <span className="ml-2">Có mây</span>
        </button>
        <div className="ml-4 flex">
          <IconButton label="Show hidden icons" className={tray}>
            <Line size={14} stroke={1.8}>
              <path d="M2 17L12 7l10 10" />
            </Line>
          </IconButton>
          <IconButton label="Microphone" className={tray}>
            <svg width="12" height="17" viewBox="0 0 12 17" aria-hidden="true">
              <rect x="3" y="0" width="6" height="12" rx="2" fill="#fff" />
              <path d="M1 8v2q0 4 5 4t5-4V8M6 14v2.500M3 16.500h6" fill="none" stroke="#fff" />
            </svg>
          </IconButton>
          <IconButton label="Network" className={tray}>
            <svg width="17" height="15" viewBox="0 0 17 15" fill="none" stroke="#fff" aria-hidden="true">
              <path d="M5 2.500h11.500v8H3V7M.5.500h4.500v4.500H.5ZM2.700 5v3M9.500 10.500v3M6 13.500h7" />
            </svg>
          </IconButton>
          <IconButton label="Volume" className={tray}>
            <svg width="17" height="14" viewBox="0 0 17 14" fill="none" stroke="#fff" aria-hidden="true">
              <path d="M.5 4.500h2.500L6.500 1v12L3 9.500H.5ZM9 5q1.500 2 0 4M11.200 3q3 4 0 8M13.500 1.500q4.500 5.500 0 11" />
            </svg>
          </IconButton>
        </div>
        <IconButton label="Windows Ink" className="h-10 w-8">
          <Line size={18} stroke={1.5}>
            <path d="M5 12q-4 1-4 5t4 3.500q3 0 5-4M8 19l1-4L18 3q2-1.500 3.500 0t0 3.500l-9 11-4.500 1.500M15 16q-1 4 1.500 3.500T20 15q1-2 2.500-2" />
          </Line>
        </IconButton>
        <IconButton label="Touch keyboard" className="h-10 w-8">
          <svg width="23" height="13" viewBox="0 0 23 13" fill="none" stroke="#fff" aria-hidden="true">
            <rect x=".5" y=".5" width="22" height="12" />
            <path d="M3 4h17M3 6.500h17" strokeDasharray="1.500 1.500" />
            <path d="M3 9.500h2M6.500 9.500h10M18 9.500h2" />
          </svg>
        </IconButton>
        <span className="w-[38px] text-center text-[12px]">VIE</span>
        <span className="w-[62px] text-center text-[12px] leading-[18px]">
          6:26 PM
          <br />
          12/9/2022
        </span>
        <span className="ml-px h-10 w-[5px] border-l border-[#6b6260]" />
      </div>
    </footer>
  );
}

export default function App() {
  return (
    <div className="flex h-screen flex-col overflow-hidden font-['Open_Sans','Noto_Sans',sans-serif]">
      <div className="relative min-h-0 flex-1">
        <ZaloWindow />
        <MeetWindow />
        <svg
          className="absolute top-[562px] left-[910px]"
          width="12"
          height="20"
          viewBox="0 0 12 20"
          aria-hidden="true"
        >
          <path d="M.6 1v15.500l3.500-3.300 2.500 5.800 2.500-1-2.500-5.700h4.700Z" fill="#fff" stroke="#111" strokeWidth=".8" />
        </svg>
        <SharingBar />
      </div>
      <Taskbar />
    </div>
  );
}
